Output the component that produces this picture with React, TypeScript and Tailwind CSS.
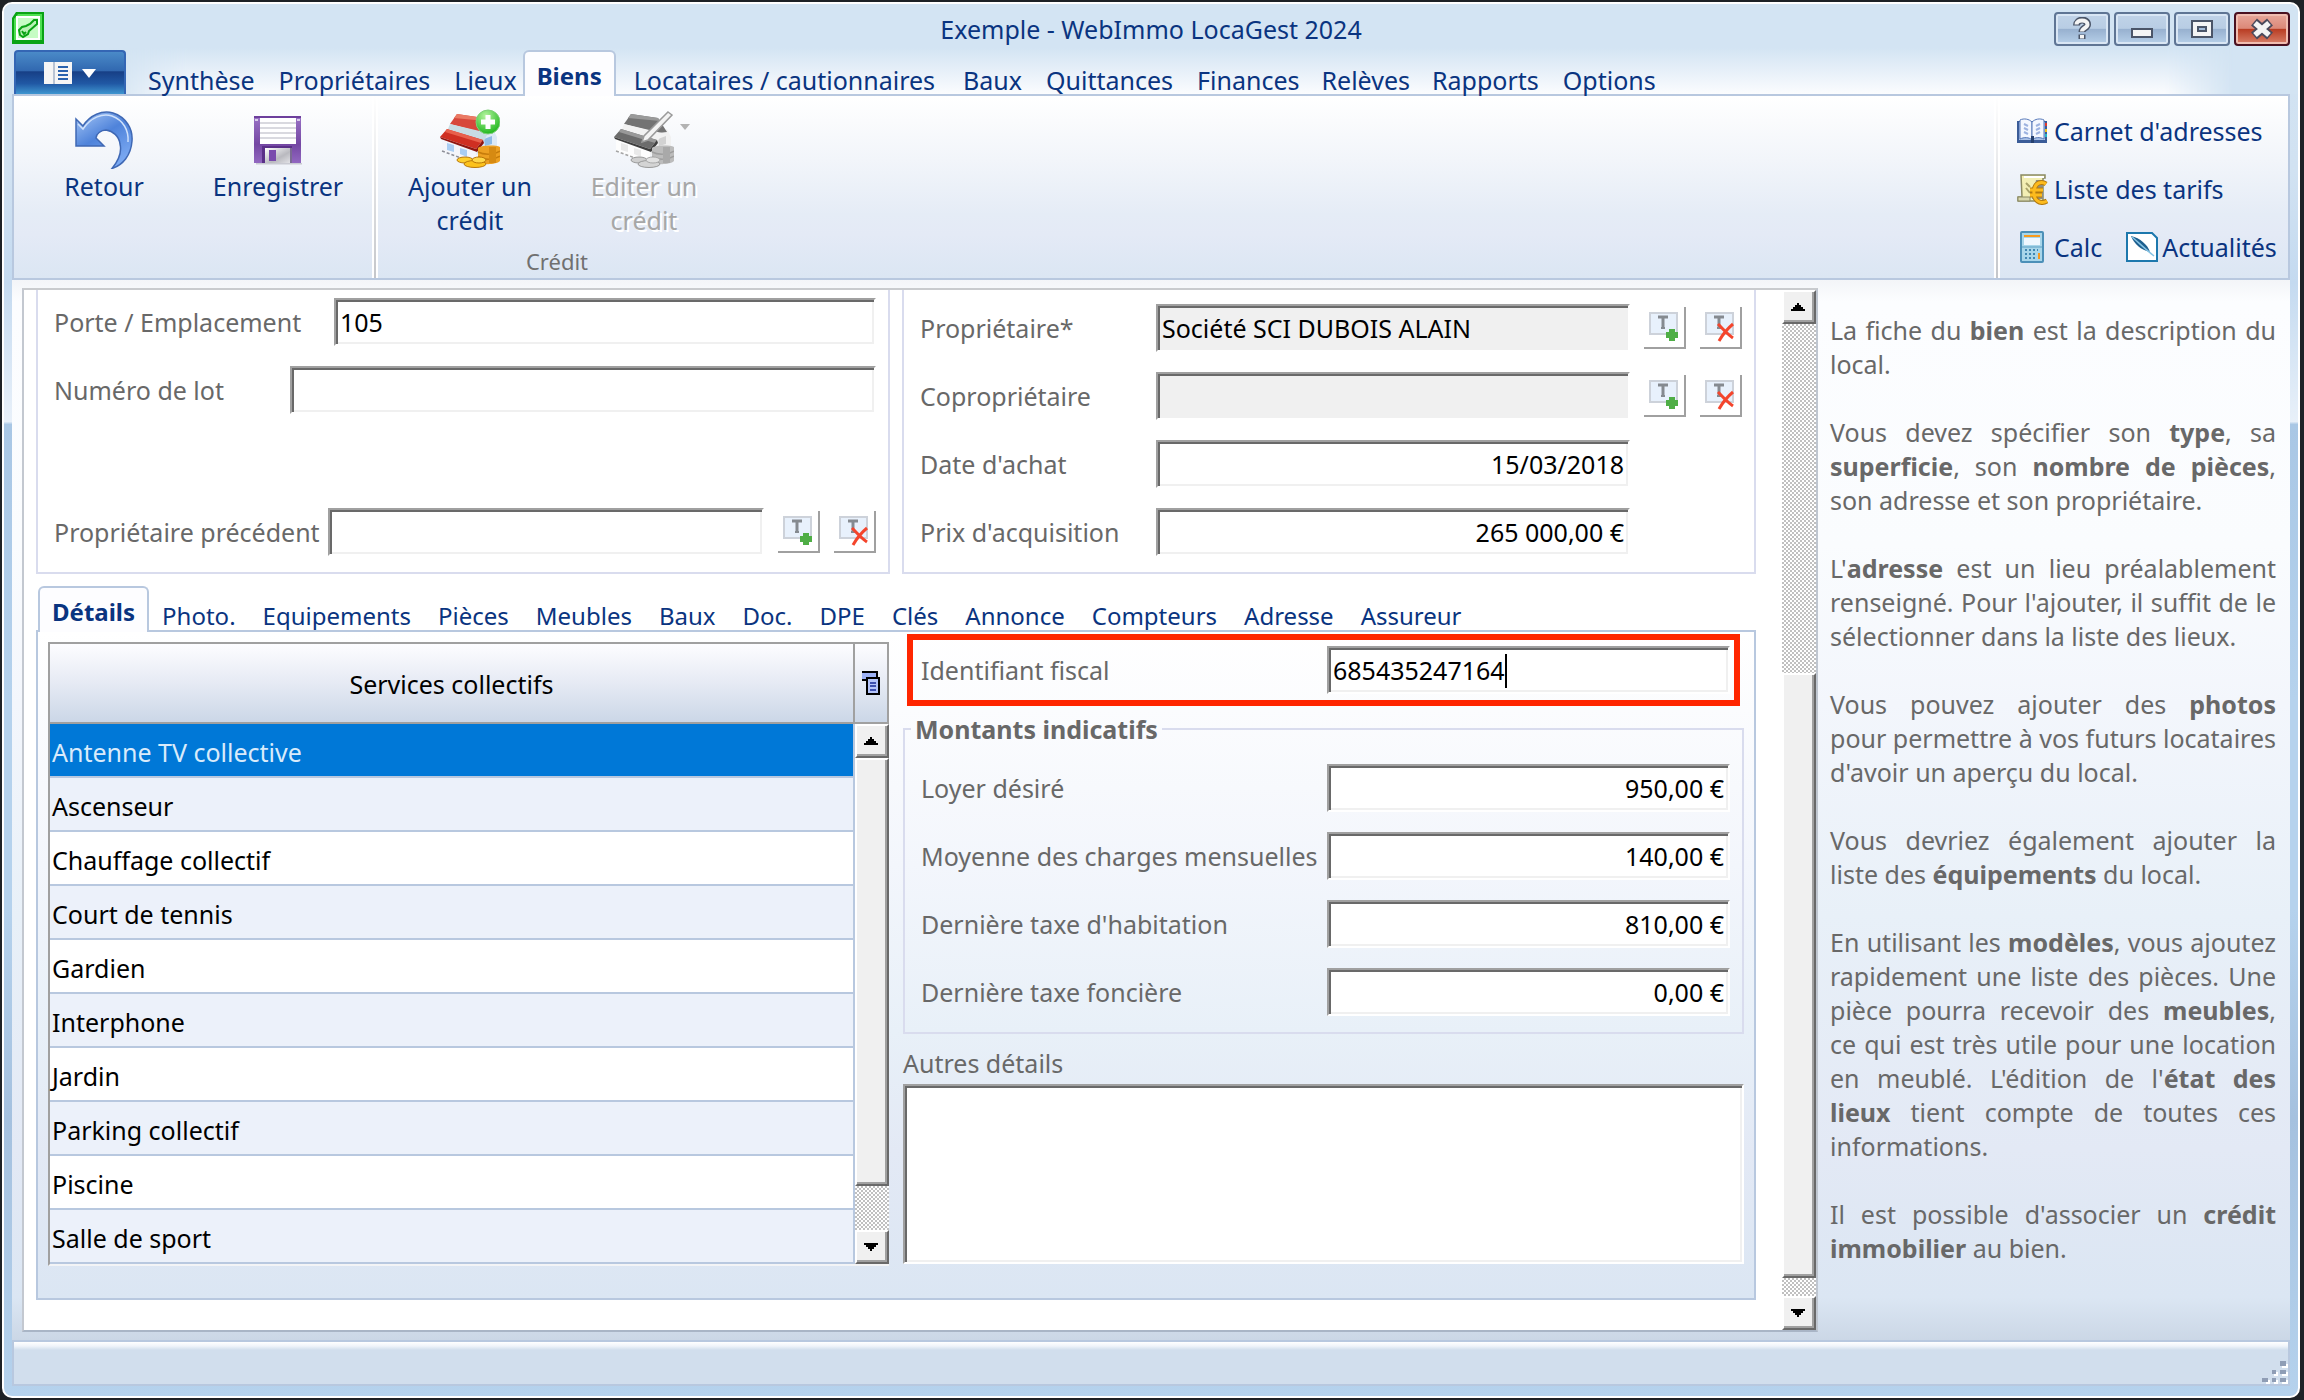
import { useState, type ReactNode } from "react";
import clsx from "clsx";

const MENU = [
	{ label: "Synthèse", gap: "ml-[22px]" },
	{ label: "Propriétaires", gap: "ml-6" },
	{ label: "Lieux", gap: "ml-6" },
	{ label: "Biens", gap: "ml-1.5" },
	{ label: "Locataires / cautionnaires", gap: "ml-[18px]" },
	{ label: "Baux", gap: "ml-7" },
	{ label: "Quittances", gap: "ml-6" },
	{ label: "Finances", gap: "ml-6" },
	{ label: "Relèves", gap: "ml-[22px]" },
	{ label: "Rapports", gap: "ml-[22px]" },
	{ label: "Options", gap: "ml-6" },
];

const TABS = [
	"Détails",
	"Photo.",
	"Equipements",
	"Pièces",
	"Meubles",
	"Baux",
	"Doc.",
	"DPE",
	"Clés",
	"Annonce",
	"Compteurs",
	"Adresse",
	"Assureur",
];

const SERVICES = [
	"Antenne TV collective",
	"Ascenseur",
	"Chauffage collectif",
	"Court de tennis",
	"Gardien",
	"Interphone",
	"Jardin",
	"Parking collectif",
	"Piscine",
	"Salle de sport",
];

const AMOUNTS = [
	{ id: "loyer", label: "Loyer désiré", value: "950,00 €" },
	{ id: "charges", label: "Moyenne des charges mensuelles", value: "140,00 €" },
	{ id: "habitation", label: "Dernière taxe d'habitation", value: "810,00 €" },
	{ id: "fonciere", label: "Dernière taxe foncière", value: "0,00 €" },
];

const sunken =
	"border-2 border-t-[#a0a0a0] border-l-[#a0a0a0] border-r-white border-b-white bg-white shadow-[inset_2px_2px_0_#696969,inset_-2px_-2px_0_#f0f0f0] text-black outline-none";

const raised =
	"border-2 border-t-white border-l-white border-r-[#696969] border-b-[#696969] bg-[#f0f0f0] shadow-[inset_-2px_-2px_0_#a0a0a0]";

const track =
	"bg-[conic-gradient(#c0c0c0_25%,#fff_0_50%,#c0c0c0_0_75%,#fff_0)] bg-[length:4px_4px]";

function AppIcon() {
	return (
		<svg viewBox="0 0 32 32" className="h-8 w-8">
			<path d="M4 0H32V32H0V6Z" fill="#0aa314" />
			<path d="M6 2H30V28H2V7Z" fill="#4fe052" />
			<path d="M4 4H28V28H4Z" fill="#fff" />
			<path d="M6 6H26V26H6Z" fill="#c6fcc4" />
			<path
				d="M18 12L22 8H25V12L17 19L16 22L11 25L8 23L7 18L10 15L14 14ZM10 19L12 22L14 20"
				fill="#b9f2b5"
				stroke="#0aa314"
				strokeWidth="2"
			/>
		</svg>
	);
}

function UndoIcon() {
	return (
		<svg viewBox="0 0 60 60" className="h-[60px] w-[60px]">
			<defs>
				<linearGradient id="undo" x1="0" y1="0" x2="0.6" y2="1">
					<stop offset="0" stopColor="#a9c9f7" />
					<stop offset="0.5" stopColor="#4f83da" />
					<stop offset="1" stopColor="#7ba9f2" />
				</linearGradient>
			</defs>
			<path
				d="M2 10L9 17C16 6 28 1 39 4C52 8 59 20 58 32C57 46 49 56 38 59.500C45 51 48 43 46 35C45 27 39 22 32 21C27 21 22 25 22 29L30 37H2Z"
				fill="url(#undo)"
				stroke="#3f68b4"
				strokeWidth="1.500"
			/>
			<path
				d="M4 15L9 20C17 8 29 4 38 7C49 11 55 21 54 33"
				fill="none"
				stroke="#cfe1fb"
				strokeWidth="1.500"
			/>
		</svg>
	);
}

function FloppyIcon() {
	return (
		<svg viewBox="0 0 60 60" className="h-[60px] w-[60px]">
			<defs>
				<linearGradient id="floppy" x1="0" y1="0" x2="0" y2="1">
					<stop offset="0" stopColor="#9a73c6" />
					<stop offset="0.6" stopColor="#7447a3" />
					<stop offset="1" stopColor="#9167c0" />
				</linearGradient>
				<linearGradient id="shutter" x1="0" y1="0" x2="1" y2="1">
					<stop offset="0" stopColor="#ffffff" />
					<stop offset="0.6" stopColor="#b9b9bf" />
					<stop offset="1" stopColor="#e4e4e8" />
				</linearGradient>
			</defs>
			<path d="M8 54H54V55.500H8Z" fill="#c9cad2" />
			<path d="M6 7H53V54H6Z" fill="url(#floppy)" />
			<path d="M6 7H53V9H6Z" fill="#6d3f9c" />
			<path d="M12 9H48V35H12Z" fill="#fff" />
			<path d="M12 14H48M12 19H48M12 24H48M12 29H48" stroke="#d9d9df" strokeWidth="2" />
			<path d="M7 10H10V12H7ZM49 10H52V12H49Z" fill="#d9cdea" />
			<path d="M14 37H44V54H14Z" fill="#5a3088" />
			<path d="M17 39H43V54H17Z" fill="url(#shutter)" />
			<path d="M21 41H28V52H21Z" fill="#7a4bad" />
			<path d="M42 39H44V54H42Z" fill="#7a6a92" />
		</svg>
	);
}

function HouseShape({ gray }: { gray?: boolean }) {
	return (
		<>
			<path d="M40 24L53 20L57 28V38L36 46Z" fill={gray ? "#f1f1f1" : "#dce9f6"} />
			<path d="M44 30L52 27V35L45 37Z" fill={gray ? "#d2d2d2" : "#8fbbe6"} />
			<path d="M17 5L44 9L53 23L44 24L10 15Z" fill={gray ? "#737373" : "#d7473b"} />
			<path d="M17 5L44 9L46 12L14 9Z" fill={gray ? "#9a9a9a" : "#ea7a64"} />
			<path d="M10 15L48 24L44 32L8 20Z" fill={gray ? "#f2f2f2" : "#c8dce3"} />
			<path d="M2 29L36 40V51L30 53L2 42Z" fill={gray ? "#fdfdfd" : "#f4f5fa"} />
			<path d="M2 42L32 53" stroke={gray ? "#a4a4a4" : "#8d8f98"} strokeWidth="1.500" strokeDasharray="3 2" />
			<path
				d="M7 34L14 36V43L7 41ZM20 39L27 41V48L20 45Z"
				fill={gray ? "#e9e9e9" : "#a9cdf3"}
			/>
			<path d="M7 20L43 31L36 40L0 28Z" fill={gray ? "#6c6c6c" : "#cf2f22"} />
			<path d="M7 20L43 31L41 34L5 23Z" fill={gray ? "#999" : "#e8604c"} />
			<path d="M0 28L36 40L43 31L44 34L37 43L1 30Z" fill={gray ? "#3f3f3f" : "#8f1610"} />
			<path
				d="M38 39C42 36 56 36 60 38V52C56 56 42 56 38 53Z"
				fill={gray ? "#bcbcbc" : "#eda022"}
			/>
			<path
				d="M38 43C44 46 54 46 60 42M38 48C44 51 54 51 60 47"
				fill="none"
				stroke={gray ? "#9e9e9e" : "#c67c0c"}
				strokeWidth="1.500"
			/>
			<path d="M49 38H56V54H49Z" fill={gray ? "#a9a9a9" : "#d68a12"} />
			<ellipse cx="25" cy="51" rx="8" ry="3" fill={gray ? "#cfcfcf" : "#ffd02e"} stroke={gray ? "#999" : "#b97808"} />
			<ellipse cx="35" cy="55" rx="11" ry="3.500" fill={gray ? "#d4d4d4" : "#fcc21c"} stroke={gray ? "#999" : "#b97808"} />
			<ellipse cx="39" cy="51" rx="7" ry="3" fill={gray ? "#e1e1e1" : "#ffd84a"} stroke={gray ? "#aaa" : "#b97808"} />
		</>
	);
}

function AddCreditIcon() {
	return (
		<svg viewBox="0 0 60 60" className="h-[60px] w-[60px]">
			<defs>
				<radialGradient id="plus" cx="0.4" cy="0.25" r="0.8">
					<stop offset="0" stopColor="#b6f5a0" />
					<stop offset="1" stopColor="#17b316" />
				</radialGradient>
			</defs>
			<HouseShape />
			<circle cx="48" cy="13" r="12" fill="url(#plus)" stroke="#7fcf78" />
			<path d="M48 6V20M41 13H55" stroke="#fff" strokeWidth="5" />
		</svg>
	);
}

function EditCreditIcon() {
	return (
		<svg viewBox="0 0 60 60" className="h-[60px] w-[60px]">
			<HouseShape gray />
			<path d="M54 3L58 6L34 31L28 33L30 27Z" fill="#f3f3f3" stroke="#9a9a9a" strokeWidth="1.500" />
		</svg>
	);
}

function BookIcon() {
	return (
		<svg viewBox="0 0 32 26" className="h-[26px] w-8">
			<path d="M1 3H31V25H1Z" fill="#3b5c98" />
			<path d="M3 4H29V22H3Z" fill="#a9c0e6" />
			<path d="M4 2C8 0 13 1 16 4V22C13 19 8 19 4 21Z" fill="#f4f7ff" stroke="#5577b8" />
			<path d="M28 2C24 0 19 1 16 4V22C19 19 24 19 28 21Z" fill="#f4f7ff" stroke="#5577b8" />
			<path d="M8 6L12 8M8 10L12 12M8 14L12 16M24 6L20 8M24 10L20 12M24 14L20 16" stroke="#9db2e0" strokeWidth="2" />
			<path d="M29 5H31V8H29Z" fill="#e23a2c" />
			<path d="M29 11H31V14H29Z" fill="#f3c118" />
			<path d="M29 16H31V19H29Z" fill="#24b7c9" />
			<path d="M15 18H18V25H15Z" fill="#25406f" />
		</svg>
	);
}

function PriceIcon() {
	return (
		<svg viewBox="0 0 32 32" className="h-8 w-8">
			<path d="M5 2H29V5H27V28H2V24H6Z" fill="#f3efb4" stroke="#8b8a62" strokeWidth="1.500" />
			<path d="M20 7H27V26H16Z" fill="#8f8f84" />
			<path d="M8 3H28V5H8Z" fill="#fff" />
			<path d="M2 24H14V28H2Z" fill="#d8d7ad" stroke="#8b8a62" />
			<path d="M10 10L14 14M10 15L14 20" stroke="#a9a36a" strokeWidth="2" />
			<path
				d="M30 11C26 8 19 9 18 18C17 27 24 32 31 28M14 17H27M14 22H26"
				fill="none"
				stroke="#b27a10"
				strokeWidth="5"
			/>
			<path
				d="M30 11C26 8 19 9 18 18C17 27 24 32 31 28M14 17H27M14 22H26"
				fill="none"
				stroke="#fdbb1d"
				strokeWidth="3"
			/>
		</svg>
	);
}

function CalcIcon() {
	return (
		<svg viewBox="0 0 24 32" className="mx-1 h-8 w-6">
			<rect x="1" y="1" width="22" height="30" rx="1" fill="#a8d6ea" stroke="#4c90b8" strokeWidth="2" />
			<path d="M4 4H20V6H4Z" fill="#f79a1e" />
			<path d="M4 7H20V14H4Z" fill="#eef7ff" />
			<path d="M2 16H22" stroke="#5b9fc4" />
			<path d="M5 19H18M5 23H17M5 27H17" stroke="#4188b2" strokeWidth="2" strokeDasharray="2 2" />
			<path d="M18 22H20V28H18Z" fill="#f79a1e" />
		</svg>
	);
}

function NewsIcon() {
	return (
		<svg viewBox="0 0 32 30" className="h-[30px] w-8">
			<path d="M1 1H26L31 6V29H1Z" fill="#fff" stroke="#1d78ad" strokeWidth="2" />
			<path d="M5 4C14 6 22 13 24 20C15 18 8 12 5 4Z" fill="#1d5f8f" />
			<path d="M6 5C12 10 19 17 28 24" fill="none" stroke="#86c3e4" strokeWidth="1.500" />
		</svg>
	);
}

function PickIcon({ remove }: { remove?: boolean }) {
	return (
		<svg viewBox="0 0 30 30" className="h-[30px] w-[30px]">
			<path d="M1 1H28V22H1Z" fill="#e8f1fc" stroke="#cdd2da" strokeWidth="2" />
			<path d="M9 5H19M14 5V16" stroke="#858a90" strokeWidth="3" />
			<path d="M12 16H16" stroke="#858a90" strokeWidth="2" />
			{remove ? (
				<path d="M13 12C18 17 22 22 28 26M28 12C22 17 18 22 14 29" fill="none" stroke="#f4452c" strokeWidth="3" />
			) : (
				<path d="M20 17H26V20H29V26H26V29H20V26H17V20H20Z" fill="#4fae46" />
			)}
		</svg>
	);
}

function PickButtons({ target }: { target: string }) {
	const cls =
		"flex h-[42px] w-[42px] shrink-0 items-center justify-center border-r-2 border-b-2 border-[#a0a0a0] bg-white";
	return (
		<>
			<button type="button" aria-label={`Choisir : ${target}`} className={cls}>
				<PickIcon />
			</button>
			<button type="button" aria-label={`Retirer : ${target}`} className={cls}>
				<PickIcon remove />
			</button>
		</>
	);
}

function Tab({
	label,
	active,
	className,
	onClick,
}: {
	label: string;
	active: boolean;
	className?: string;
	onClick: () => void;
}) {
	return (
		<button
			type="button"
			onClick={onClick}
			className={clsx(
				"whitespace-nowrap leading-7 text-[#0a3480]",
				active &&
					"z-10 -mb-0.5 rounded-t-md border-2 border-b-0 border-[#b8c8df] bg-[#fdfdff] px-3 pt-2.5 pb-1.5 text-[24px] font-bold",
				className
			)}
		>
			{label}
		</button>
	);
}

function RibbonButton({
	icon,
	label,
	disabled,
	menu,
}: {
	icon: ReactNode;
	label: string;
	disabled?: boolean;
	menu?: boolean;
}) {
	return (
		<button
			type="button"
			disabled={disabled}
			className={clsx(
				"relative flex w-[172px] flex-col items-center px-5 pt-[13px]",
				disabled ? "text-[#a7a7a7] [text-shadow:2px_2px_0_#fff]" : "text-[#0a3480]"
			)}
		>
			{icon}
			<span>{label}</span>
			{menu && (
				<svg viewBox="0 0 10 6" className="absolute top-7 right-10 h-1.5 w-2.5">
					<path d="M0 0H10L5 6Z" fill="#b3b3b3" />
				</svg>
			)}
		</button>
	);
}

function Separator() {
	return (
		<div className="flex w-1.5 shrink-0">
			<div className="w-0.5 bg-white" />
			<div className="w-0.5 bg-linear-to-b from-white to-[#c4c6ca]" />
			<div className="w-0.5 bg-white" />
		</div>
	);
}

function WindowButton({ label, close, children }: { label: string; close?: boolean; children: ReactNode }) {
	return (
		<button
			type="button"
			aria-label={label}
			className={clsx(
				"flex h-[34px] w-14 items-center justify-center rounded-sm border-2",
				close
					? "border-[#4a1020] bg-[linear-gradient(#e8a89c_0%,#dc8878_48%,#b83c22_50%,#d8806a_100%)] shadow-[inset_0_0_0_2px_#f0bcb0]"
					: "border-[#5f7594] bg-[linear-gradient(#c1d3e8_0%,#b8cde4_48%,#97b0cf_50%,#b7d0e9_100%)] shadow-[inset_0_0_0_2px_#d9e6f4]"
			)}
		>
			<svg viewBox="0 0 26 24" className="h-6 w-[26px]">
				{children}
			</svg>
		</button>
	);
}

function Scrollbar({ before, thumb, after }: { before: string; thumb: string; after: string }) {
	return (
		<div className="flex flex-1 flex-col">
			<button
				type="button"
				aria-label="Défiler vers le haut"
				className={clsx("flex h-[34px] w-full shrink-0 items-center justify-center pr-0.5", raised)}
			>
				<svg viewBox="0 0 14 8" className="h-2 w-3.5">
					<path d="M6 0H8V2H10V4H12V6H14V8H0V6H2V4H4V2H6Z" />
				</svg>
			</button>
			<div className={clsx(before, track)} />
			<div className={clsx(thumb, raised)} />
			<div className={clsx(after, track)} />
			<button
				type="button"
				aria-label="Défiler vers le bas"
				className={clsx("flex h-[34px] w-full shrink-0 items-center justify-center pr-0.5", raised)}
			>
				<svg viewBox="0 0 14 8" className="h-2 w-3.5">
					<path d="M0 0H14V2H12V4H10V6H8V8H6V6H4V4H2V2H0Z" />
				</svg>
			</button>
		</div>
	);
}

function Field({
	id,
	label,
	labelWidth,
	value = "",
	inputClass,
	readOnly,
	children,
}: {
	id: string;
	label: string;
	labelWidth: string;
	value?: string;
	inputClass?: string;
	readOnly?: boolean;
	children?: ReactNode;
}) {
	return (
		<div className="flex items-center">
			<label htmlFor={id} className={clsx("shrink-0 whitespace-nowrap", labelWidth)}>
				{label}
			</label>
			<input
				id={id}
				type="text"
				defaultValue={value}
				readOnly={readOnly}
				className={clsx("h-12 min-w-0 flex-1 px-1", sunken, readOnly && "bg-[#f0f0f0]!", inputClass)}
			/>
			{children && <div className="ml-3.5 flex gap-3.5">{children}</div>}
		</div>
	);
}

function App() {
	const [menu, setMenu] = useState("Biens");
	const [tab, setTab] = useState("Détails");
	const [selected, setSelected] = useState(0);

	return (
		<div className="flex min-h-screen bg-[#1d2126] p-0.5 pr-1 font-['Noto_Sans',sans-serif] text-[25px] leading-[34px] text-[#686868]">
			<div className="flex flex-1 flex-col rounded-[10px] border-2 border-white bg-[linear-gradient(#d3e4f3_0%,#d1e2f2_12%,#c4daf0_20%,#e8f0f9_30%,#a9c7e5_30.200%,#b5d2ed_50%,#b5d2ed_65%,#a5c1df_80%,#b5d2ed_100%)] px-2">
				<header className="-mx-2 rounded-t-lg bg-[#d3e4f3] px-2">
					<div className="grid h-11 grid-cols-[1fr_auto_1fr] items-start pt-2">
						<AppIcon />
						<h1 className="text-[#0a3480]">Exemple - WebImmo LocaGest 2024</h1>
						<div className="flex justify-end gap-1">
							<WindowButton label="Aide">
								<path
									d="M7.500 8.500C7.500 1.500 18.500 1.500 18.500 7.500C18.500 11 13 11 13 15M13 17.500V22"
									fill="none"
									stroke="#4b5568"
									strokeWidth="7"
								/>
								<path
									d="M7.500 7.500C7.500 2 18.500 2 18.500 7.500C18.500 11 13 11 13 14.500M13 18V21.500"
									fill="none"
									stroke="#f4f4f4"
									strokeWidth="4"
								/>
							</WindowButton>
							<WindowButton label="Réduire">
								<path d="M3 12H23V20H3Z" fill="#f4f4f4" stroke="#4b5568" strokeWidth="2" />
							</WindowButton>
							<WindowButton label="Agrandir">
								<path d="M3 4H23V20H3Z" fill="#f4f4f4" stroke="#4b5568" strokeWidth="2" />
								<path d="M9 10H17V14H9Z" fill="#a4bcd9" stroke="#4b5568" strokeWidth="2" />
							</WindowButton>
							<WindowButton label="Fermer" close>
								<path d="M5 5L21 19M21 5L5 19" stroke="#4b4a5c" strokeWidth="9" />
								<path d="M6 6L20 18M20 6L6 18" stroke="#f4f4f4" strokeWidth="5.500" />
							</WindowButton>
						</div>
					</div>

					<nav className="relative flex h-[46px] items-end">
						<div className="absolute inset-y-0 right-14 left-24 bg-linear-to-b from-[#d3e4f3] to-[#fbfcfe] [mask-image:linear-gradient(to_right,transparent,#000_80px,#000_calc(100%-70px),transparent)]" />
						<button
							type="button"
							aria-label="Menu principal"
							className="relative ml-0.5 flex h-11 w-28 items-center justify-center gap-2.5 rounded-t border-2 border-b-0 border-[#3466b4] bg-[linear-gradient(#4a8ac8_0%,#3168b0_45%,#173f86_47%,#2058a4_75%,#3f96d0_100%)]"
						>
							<svg viewBox="0 0 28 22" className="h-[22px] w-7">
								<path d="M0 0H28V22H0Z" fill="#f5f5f5" />
								<path d="M9 0H11V22H9Z" fill="#b9c4d4" />
								<path d="M14 5H24M14 9H24M14 13H24M14 17H24" stroke="#2a62ae" strokeWidth="2" />
							</svg>
							<svg viewBox="0 0 14 9" className="h-[9px] w-3.5">
								<path d="M0 0H14L7 9Z" fill="#fff" />
							</svg>
						</button>
						{MENU.map((item) => (
							<Tab
								key={item.label}
								label={item.label}
								active={menu === item.label}
								className={clsx("relative", item.gap)}
								onClick={() => setMenu(item.label)}
							/>
						))}
					</nav>
				</header>

				<section className="flex h-[186px] border-2 border-[#b8c8df] bg-[linear-gradient(#fff_0%,#f2f5fa_35%,#e5ecf6_65%,#e4eaf6_76%,#dbe6f3_100%)]">
					<div className="flex items-start gap-0.5 pr-2 pl-1">
						<RibbonButton icon={<UndoIcon />} label="Retour" />
						<RibbonButton icon={<FloppyIcon />} label="Enregistrer" />
					</div>
					<Separator />
					<div className="flex flex-col px-1.5">
						<div className="flex items-start gap-0.5">
							<RibbonButton icon={<AddCreditIcon />} label="Ajouter un crédit" />
							<RibbonButton icon={<EditCreditIcon />} label="Editer un crédit" disabled menu />
						</div>
						<div className="mt-2.5 text-center text-[22px] leading-7 text-[#707070]">Crédit</div>
					</div>
					<div className="flex-1" />
					<Separator />
					<div className="flex w-[288px] shrink-0 flex-col gap-6 pt-[18px] pl-4 whitespace-nowrap text-[#0a3480]">
						<a href="#carnet" className="flex items-center gap-1.5">
							<BookIcon />
							Carnet d'adresses
						</a>
						<a href="#tarifs" className="flex items-center gap-1.5">
							<PriceIcon />
							Liste des tarifs
						</a>
						<div className="flex gap-6">
							<a href="#calc" className="flex items-center gap-1.5">
								<CalcIcon />
								Calc
							</a>
							<a href="#actualites" className="flex items-center gap-1">
								<NewsIcon />
								Actualités
							</a>
						</div>
					</div>
				</section>

				<div className="flex flex-1 bg-[linear-gradient(#f3f5f8_0%,#fcfdff_2%,#fafcfe_25%,#f3f6fc_40%,#e8f0f8_60%,#e3e9f5_82%,#dbe6f3_96%,#cbd7e6_100%)]">
					<main className="mt-2 mb-2 ml-2.5 flex min-w-0 flex-1 border-2 border-t-[#c9cbce] border-r-[#bfc6d0] border-b-[#a9b5c6] border-l-[#c3c8d0] bg-white">
						<div className="flex min-w-0 flex-1 flex-col pr-[26px] pb-[30px] pl-3">
							<div className="grid grid-cols-2 gap-3">
								<div className="flex flex-col justify-between border-2 border-t-0 border-[#d9dcee] pt-2 pr-3 pb-4 pl-4">
									<div className="flex flex-col gap-5">
										<Field id="porte" label="Porte / Emplacement" labelWidth="w-[280px]" value="105" />
										<Field id="lot" label="Numéro de lot" labelWidth="w-[236px]" />
									</div>
									<Field id="precedent" label="Propriétaire précédent" labelWidth="w-[274px]">
										<PickButtons target="propriétaire précédent" />
									</Field>
								</div>
								<div className="flex flex-col gap-5 border-2 border-t-0 border-[#d9dcee] pt-3.5 pr-3 pb-4 pl-4">
									<Field
										id="proprietaire"
										label="Propriétaire*"
										labelWidth="w-[236px]"
										value="Société SCI DUBOIS ALAIN"
										readOnly
									>
										<PickButtons target="propriétaire" />
									</Field>
									<Field id="copro" label="Copropriétaire" labelWidth="w-[236px]" readOnly>
										<PickButtons target="copropriétaire" />
									</Field>
									<Field
										id="achat"
										label="Date d'achat"
										labelWidth="w-[236px]"
										value="15/03/2018"
										inputClass="mr-28 text-right"
									/>
									<Field
										id="prix"
										label="Prix d'acquisition"
										labelWidth="w-[236px]"
										value="265 000,00 €"
										inputClass="mr-28 text-right"
									/>
								</div>
							</div>

							<div className="mt-3 flex h-11 items-end gap-[27px] pl-0.5 text-[24px]">
								{TABS.map((t) => (
									<Tab
										key={t}
										label={t}
										active={tab === t}
										className={t === "Détails" ? "-mr-3.5" : ""}
										onClick={() => setTab(t)}
									/>
								))}
							</div>

							<div className="grid flex-1 grid-cols-2 gap-3.5 border-2 border-[#b8c8df] bg-[linear-gradient(#fff_0%,#f3f6fc_35%,#e8f0f8_60%,#e3e9f5_78%,#dbe6f3_100%)] px-2.5 pt-2.5 pb-8">
								<div className="flex border-2 border-r-0 border-t-[#a0a0a0] border-b-[#f3f4f6] border-l-[#a0a0a0] text-black">
									<table className="flex-1 border-separate border-spacing-0">
										<thead>
											<tr>
												<th className="h-20 border-r-2 border-b-2 border-[#a0a0a0] bg-linear-to-b from-[#fdfdff] via-[#e6eaf4] to-[#cbd7e7] pt-0.5 font-normal">
													Services collectifs
												</th>
											</tr>
										</thead>
										<tbody>
											{SERVICES.map((name, i) => (
												<tr
													key={name}
													onClick={() => setSelected(i)}
													className={
														i === selected
															? "bg-[#0078d7] text-[#d9ebfb]"
															: i % 2
																? "bg-[#ecf1fa]"
																: "bg-white"
													}
												>
													<td className="h-[54px] border-r-2 border-b-2 border-[#b8c8df] pt-1 pl-0.5">{name}</td>
												</tr>
											))}
										</tbody>
									</table>
									<div className="flex w-[34px] shrink-0 flex-col">
										<button
											type="button"
											aria-label="Colonnes"
											className="flex h-20 items-center justify-center border-r-2 border-b-2 border-[#a0a0a0] bg-linear-to-b from-[#fdfdff] via-[#e6eaf4] to-[#cbd7e7]"
										>
											<svg viewBox="0 0 18 24" className="h-6 w-[18px]">
												<path d="M0 0H16V6H4V10H0Z" fill="#9db1f5" />
												<path d="M0 1H15V6M0 9H5" fill="none" stroke="#000" strokeWidth="2" />
												<path d="M5 7H17V23H5Z" fill="#b4c4fa" stroke="#000" strokeWidth="2" />
												<path d="M8 12H14M8 15H14M8 19H14" stroke="#3d50b0" strokeWidth="2" />
											</svg>
										</button>
										<Scrollbar before="h-0" thumb="flex-[428]" after="flex-[44]" />
									</div>
								</div>

								<div className="flex flex-col">
									<div className="relative pt-1 pr-3.5 pl-[18px]">
										<Field id="fiscal" label="Identifiant fiscal" labelWidth="w-[406px]" value="685435247164" />
										<span className="absolute top-3 left-[602px] h-[34px] w-0.5 bg-black" />
										<span className="pointer-events-none absolute -top-2 right-1 -bottom-3 left-1 border-[6px] border-[#ff2600]" />
									</div>
									<fieldset className="mt-[18px] border-2 border-[#d9dcee]">
										<legend className="ml-1.5 px-1 font-bold">Montants indicatifs</legend>
										<div className="flex flex-col gap-5 pt-[18px] pr-3 pb-4 pl-4">
											{AMOUNTS.map((a) => (
												<Field
													key={a.id}
													id={a.id}
													label={a.label}
													labelWidth="w-[406px]"
													value={a.value}
													inputClass="text-right"
												/>
											))}
										</div>
									</fieldset>
									<label htmlFor="autres" className="mt-3">
										Autres détails
									</label>
									<textarea id="autres" className={clsx("mt-1 mb-0.5 flex-1 resize-none px-1", sunken)} />
								</div>
							</div>
						</div>
						<div className="flex w-[34px] shrink-0">
							<Scrollbar before="flex-[350]" thumb="flex-[604]" after="flex-[18]" />
						</div>
					</main>

					<aside className="flex w-[472px] shrink-0 flex-col gap-[34px] pt-[33px] pr-3.5 pl-3 text-justify">
						<p>
							La fiche du <b>bien</b> est la description du local.
						</p>
						<p>
							Vous devez spécifier son <b>type</b>, sa <b>superficie</b>, son <b>nombre de pièces</b>, son
							adresse et son propriétaire.
						</p>
						<p>
							L'<b>adresse</b> est un lieu préalablement renseigné. Pour l'ajouter, il suffit de le sélectionner
							dans la liste des lieux.
						</p>
						<p>
							Vous pouvez ajouter des <b>photos</b> pour&nbsp;permettre à vos futurs locataires d'avoir un aperçu
							du local.
						</p>
						<p>
							Vous devriez également ajouter la liste des <b>équipements</b> du local.
						</p>
						<p>
							En utilisant les <b>modèles</b>, vous ajoutez rapidement une liste des pièces. Une pièce pourra
							recevoir des <b>meubles</b>, ce qui est très utile pour une location en meublé. L'édition de l'
							<b>état des lieux</b> tient compte de toutes ces informations.
						</p>
						<p>
							Il est possible d'associer un <b>crédit immobilier</b> au bien.
						</p>
					</aside>
				</div>

				<footer className="mb-2.5 flex h-[46px] items-end justify-end border-2 border-[#b8c8df] bg-[linear-gradient(#fff_0,#f0f4fa_4px,#d1deed_8px)]">
					<svg viewBox="0 0 26 24" className="h-6 w-[26px]">
						<path d="M20 4H26V8H20ZM12 12H16V16H12ZM20 12H26V16H20ZM4 20H8V24H4ZM12 20H16V24H12ZM20 20H26V24H20Z" fill="#fff" />
						<path d="M18 1H24V6H18ZM10 10H14V14H10ZM18 10H24V14H18ZM0 18H6V22H0ZM10 18H14V22H10ZM18 18H24V22H18Z" fill="#8f9db5" />
					</svg>
				</footer>
			</div>
		</div>
	);
}

export default App;
